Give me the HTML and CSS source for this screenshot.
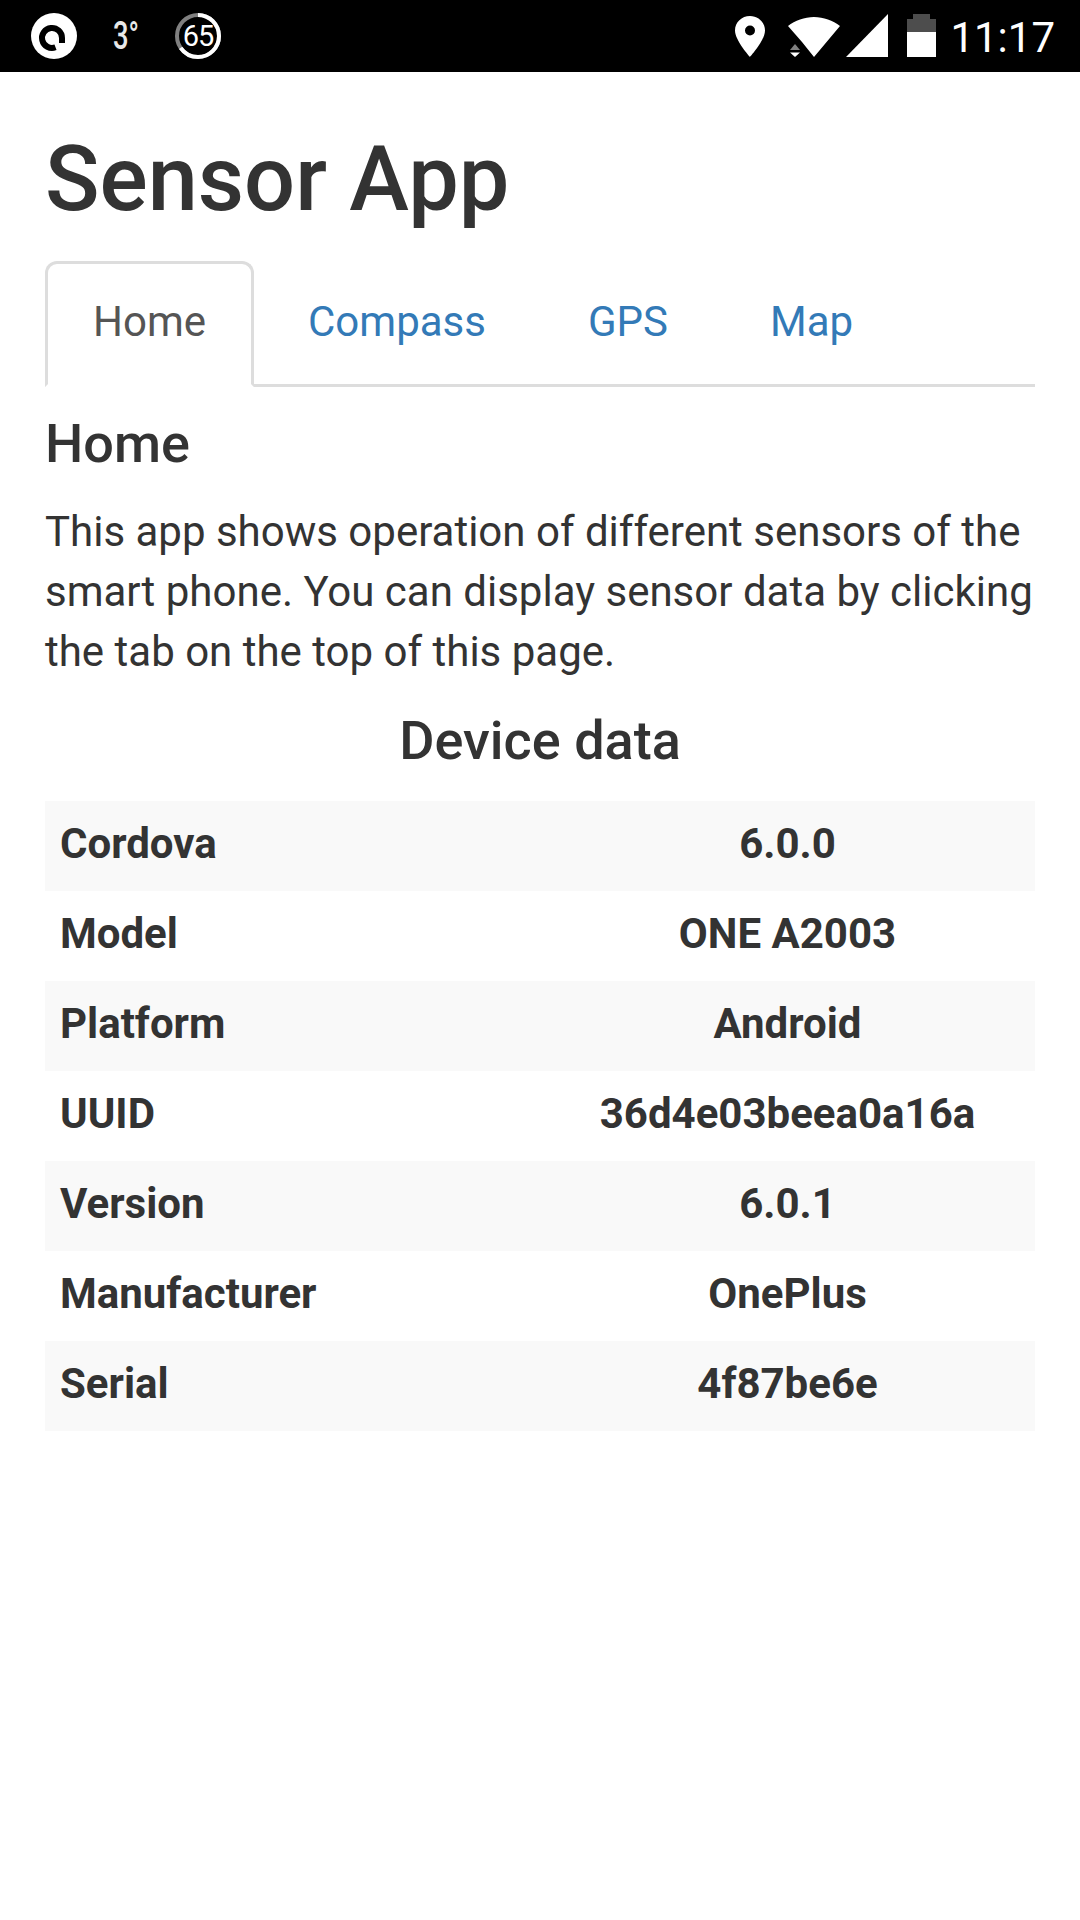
FILE: index.html
```html
<!DOCTYPE html>
<html lang="en">
<head>
    <meta charset="UTF-8">
    <title>Sensor App</title>
    <link rel="stylesheet" href="styles.css">
</head>
<body>
    <div class="statusbar">
        <div class="status-left">
            <svg class="icon-a" width="46" height="46" viewBox="0 0 46 46">
                <circle cx="23" cy="23" r="23" fill="#fff"/>
                <path d="M31 30V25A10 10 0 1 0 24.500 34.300" fill="none" stroke="#000" stroke-width="6"/>
            </svg>
            <span class="temp">3°</span>
            <div class="ring">
                <svg width="46" height="46" viewBox="0 0 46 46">
                    <circle cx="23" cy="23" r="21" fill="none" stroke="#808080" stroke-width="4"/>
                    <circle cx="23" cy="23" r="21" fill="none" stroke="#fff" stroke-width="4" stroke-dasharray="85.800 132" transform="rotate(-90 23 23)"/>
                </svg>
                <span class="ring-num">65</span>
            </div>
        </div>
        <div class="status-right">
            <svg width="30" height="41" viewBox="0 0 30 41">
                <path fill-rule="evenodd" d="M15 0C6.700 0 0 6.300 0 14.500 0 24.500 15 41 15 41s15-16.500 15-26.500C30 6.300 23.300 0 15 0zm0 9.500a5 5 0 1 1 0 10 5 5 0 0 1 0-10z" fill="#fff"/>
            </svg>
            <svg class="wifi" width="52" height="40" viewBox="0 0 52 40">
                <path d="M0 9C7 3.500 16.500 0 26 0s19 3.500 26 9L26 40 20 32.500 14 25z" fill="#fff"/>
                <path d="M2 33l5-6 5 6z" fill="#808080"/>
                <path d="M2 35.500h10L7 40z" fill="#fff"/>
            </svg>
            <svg class="signal" width="42" height="43" viewBox="0 0 42 43">
                <path d="M0 43L42 0v43z" fill="#fff"/>
            </svg>
            <svg class="battery" width="29" height="43" viewBox="0 0 29 43">
                <path d="M0 5h6V0h17v5h6v14H0z" fill="#4d4d4d"/>
                <path d="M0 18h29v25H0z" fill="#fff"/>
            </svg>
            <span class="clock">11:17</span>
        </div>
    </div>
    <div class="page">
        <h1>Sensor App</h1>
        <ul class="tabs">
            <li class="active"><a href="#">Home</a></li>
            <li><a href="#">Compass</a></li>
            <li><a href="#">GPS</a></li>
            <li><a href="#">Map</a></li>
        </ul>
        <h3>Home</h3>
        <p>This app shows operation of different sensors of the smart phone. You can display sensor data by clicking the tab on the top of this page.</p>
        <h3 class="center">Device data</h3>
        <table>
            <tr><th>Cordova</th><td>6.0.0</td></tr>
            <tr><th>Model</th><td>ONE A2003</td></tr>
            <tr><th>Platform</th><td>Android</td></tr>
            <tr><th>UUID</th><td>36d4e03beea0a16a</td></tr>
            <tr><th>Version</th><td>6.0.1</td></tr>
            <tr><th>Manufacturer</th><td>OnePlus</td></tr>
            <tr><th>Serial</th><td>4f87be6e</td></tr>
        </table>
    </div>
</body>
</html>
```
FILE: styles.css
```css
* {
    box-sizing: border-box;
}

body {
    margin: 0;
    height: 1920px;
    overflow: hidden;
    background: #fff;
    color: #333;
    font-family: Roboto, sans-serif;
    font-size: 42px;
    line-height: 60px;
}

.statusbar {
    height: 72px;
    background: #000;
    color: #fff;
    display: flex;
    justify-content: space-between;
    align-items: center;
}

.status-left {
    display: flex;
    align-items: center;
    padding-left: 31px;
}

.status-left svg {
    display: block;
}

.temp {
    margin-left: 36px;
    width: 62px;
    font-size: 38px;
    font-weight: 500;
    line-height: 46px;
    color: #e8e8e8;
    transform: scaleX(0.72);
    transform-origin: left center;
}

.ring {
    position: relative;
    width: 46px;
    height: 46px;
}

.ring-num {
    position: absolute;
    inset: 0;
    text-align: center;
    font-size: 29px;
    line-height: 46px;
    letter-spacing: -1px;
}

.status-right {
    align-self: flex-end;
    margin-bottom: 15px;
    display: flex;
    align-items: flex-end;
    padding-right: 25px;
}

.status-right svg {
    display: block;
}

.wifi {
    margin-left: 23px;
}

.signal {
    margin-left: 6px;
}

.battery {
    margin-left: 19px;
}

.clock {
    margin-left: 14px;
    margin-bottom: -5px;
    font-size: 42px;
    line-height: 48px;
}

.page {
    padding: 0 45px;
}

h1 {
    margin: 58px 0 31px;
    font-size: 90px;
    line-height: 100px;
    font-weight: 500;
}

.tabs {
    display: flex;
    margin: 0;
    padding: 0;
    list-style: none;
    border-bottom: 3px solid #ddd;
    height: 126px;
}

.tabs li {
    margin-right: 6px;
}

.tabs a {
    display: block;
    height: 126px;
    padding: 28px 45px;
    border: 3px solid transparent;
    border-radius: 12px 12px 0 0;
    color: #337ab7;
    text-decoration: none;
}

.tabs .active a {
    border-color: #ddd #ddd #fff;
    background: #fff;
    color: #555;
}

h3 {
    margin: 27px 0 29px;
    font-size: 54px;
    line-height: 59.400px;
    font-weight: 500;
}

p {
    margin: 0 0 29px;
    font-size: 42px;
    line-height: 60px;
}

.center {
    text-align: center;
    margin-top: 0;
    margin-bottom: 30px;
}

table {
    width: 100%;
    border-collapse: collapse;
    table-layout: fixed;
}

tr:nth-child(odd) {
    background: #f9f9f9;
}

th, td {
    padding: 13px 15px 17px;
    height: 90px;
    font-weight: 700;
}

th {
    text-align: left;
}

td {
    text-align: center;
}
```
